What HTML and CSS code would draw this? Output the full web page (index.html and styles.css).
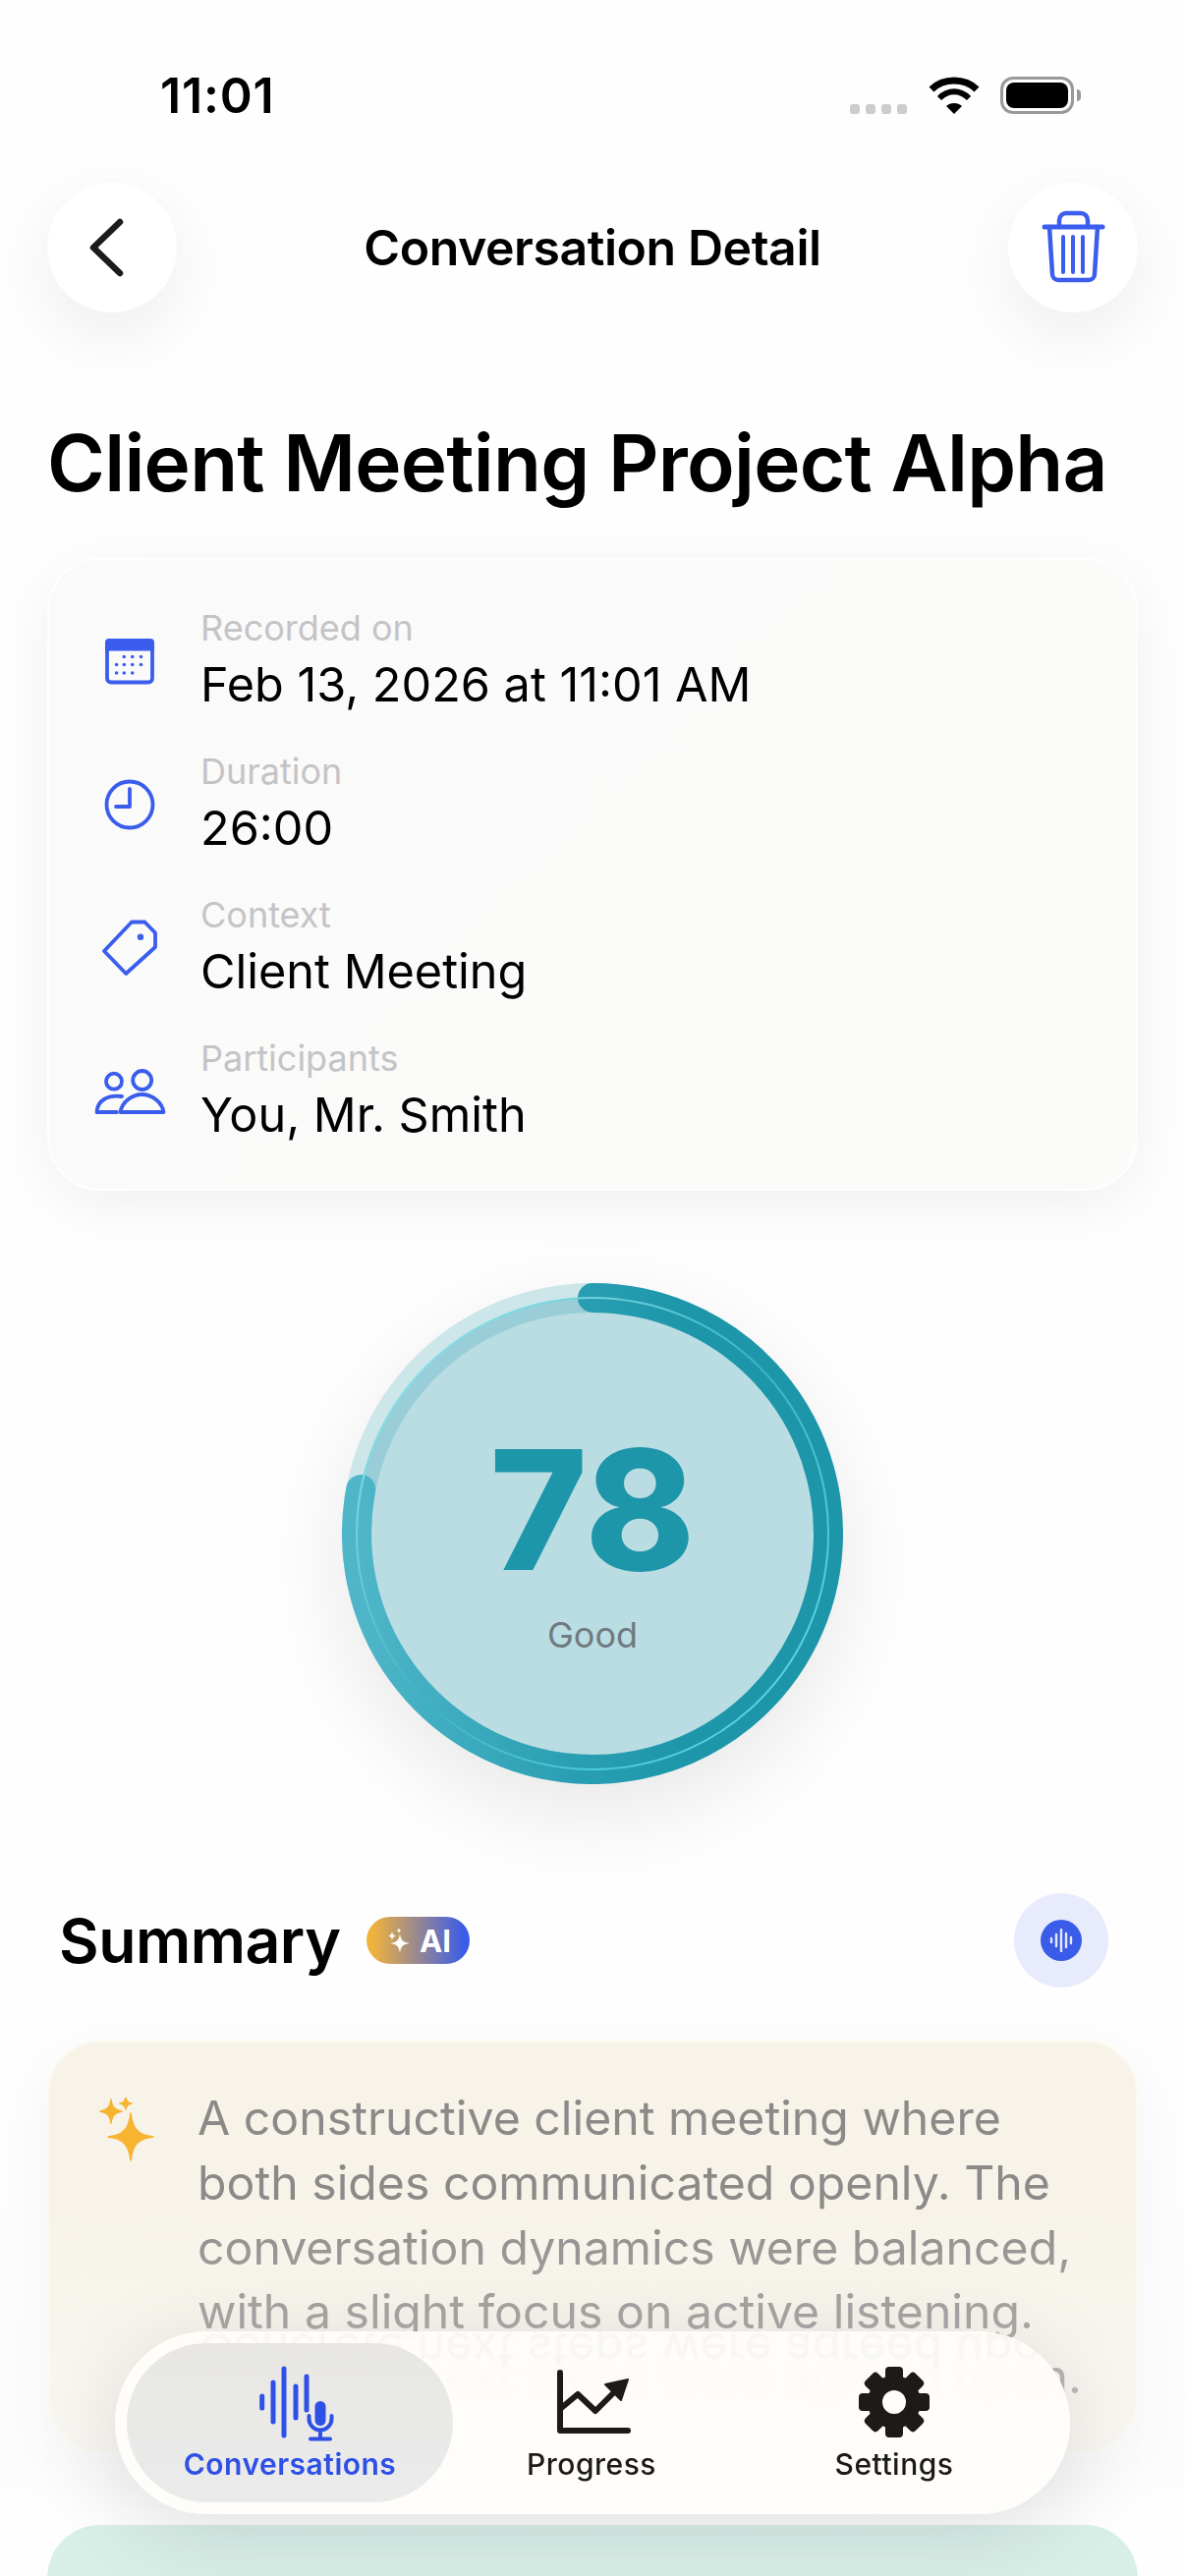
FILE: index.html
```html
<!DOCTYPE html>
<html lang="en">
<head>
<meta charset="utf-8">
<title>Conversation Detail</title>
<link rel="stylesheet" href="styles.css">
</head>
<body>
<div class="screen">
  <div class="status">
    <span class="time">11:01</span>
    <div class="status-icons">
      <div class="signal"><i></i><i></i><i></i><i></i></div>
      <svg class="wifi" viewBox="0 0 52 38" width="52" height="38"><path d="M3 13C15 1 37 1 49 13" fill="none" stroke="#000" stroke-width="7"/><path d="M11 22C20 13 32 13 41 22" fill="none" stroke="#000" stroke-width="6"/><path d="M18 30C22 26 30 26 34 30L26 38Z"/></svg>
      <div class="battery"><div class="battery-fill"></div></div>
      <div class="battery-tip"></div>
    </div>
  </div>

  <header class="topbar">
    <button class="round-btn">
      <svg class="back-icon" viewBox="0 0 60 72" width="60" height="72"><path d="M38 10L11 36L38 62" fill="none" stroke="#1c1c1c" stroke-width="6.5" stroke-linecap="round" stroke-linejoin="round"/></svg>
    </button>
    <div class="topbar-title">Conversation Detail</div>
    <button class="round-btn">
      <svg viewBox="0 0 70 80" width="70" height="80" fill="none" stroke="#3b5ded" stroke-linecap="round" stroke-linejoin="round"><path d="M6 19H65" stroke-width="5"/><path d="M21 19V12a7 7 0 0 1 7-7h15a7 7 0 0 1 7 7V19" stroke-width="4.5"/><path d="M11 19L14 67a6 6 0 0 0 6 6h31a6 6 0 0 0 6-6L60 19" stroke-width="4.5"/><path d="M25 29V65M35 29V65M45 29V65" stroke-width="4"/></svg>
    </button>
  </header>

  <h1 class="page-title">Client Meeting Project Alpha</h1>

  <section class="info-card">
    <div class="info-row">
      <div class="info-icon">
        <svg viewBox="0 0 60 60" width="60" height="60"><rect x="7" y="9" width="46" height="42.500" rx="4" fill="none" stroke="#3b5ded" stroke-width="3.800"/><path d="M9 7h42a4 4 0 0 1 4 4v8.500H5V11a4 4 0 0 1 4-4z" fill="#3b5ded"/><g fill="#3b5ded"><circle cx="24.300" cy="25.500" r="1.800"/><circle cx="32.700" cy="25.500" r="1.800"/><circle cx="41.500" cy="25.500" r="1.800"/><circle cx="16.600" cy="33.500" r="1.800"/><circle cx="24.300" cy="33.500" r="1.800"/><circle cx="32.700" cy="33.500" r="1.800"/><circle cx="41.500" cy="33.500" r="1.800"/><circle cx="16.600" cy="42" r="1.800"/><circle cx="24.300" cy="42" r="1.800"/><circle cx="32.700" cy="42" r="1.800"/></g></svg>
      </div>
      <div class="info-text"><div class="info-label">Recorded on</div><div class="info-value">Feb 13, 2026 at 11:01 AM</div></div>
    </div>
    <div class="info-row">
      <div class="info-icon">
        <svg viewBox="0 0 60 60" width="60" height="60" fill="none" stroke="#3b5ded" stroke-width="3.800" stroke-linecap="round" stroke-linejoin="round"><circle cx="30" cy="30" r="23.500"/><path d="M30 14V32H16"/></svg>
      </div>
      <div class="info-text"><div class="info-label">Duration</div><div class="info-value">26:00</div></div>
    </div>
    <div class="info-row">
      <div class="info-icon">
        <svg viewBox="0 0 60 60" width="60" height="60"><path d="M4 33L32 3.500H45.300L56 14.500V29L26.200 56Z" fill="none" stroke="#3b5ded" stroke-width="3.800" stroke-linejoin="round"/><circle cx="41" cy="18.800" r="3.200" fill="#3b5ded"/></svg>
      </div>
      <div class="info-text"><div class="info-label">Context</div><div class="info-value">Client Meeting</div></div>
    </div>
    <div class="info-row">
      <div class="info-icon">
        <svg viewBox="0 0 80 60" width="80" height="60" fill="none" stroke="#3b5ded" stroke-width="3.800" stroke-linejoin="round" stroke-linecap="round"><circle cx="24" cy="19.700" r="8"/><circle cx="52.700" cy="18.500" r="9.500"/><path d="M32 35C18 33 7 39 6.500 51H27"/><path d="M30.500 51C32 41 42 33 52.500 33C63 33 73 41 74.500 51Z"/></svg>
      </div>
      <div class="info-text"><div class="info-label">Participants</div><div class="info-value">You, Mr. Smith</div></div>
    </div>
  </section>

  <section class="score">
    <div class="score-ring">
      <svg viewBox="15 15 510 510" width="510" height="510">
        <defs>
          <linearGradient id="arc" gradientUnits="userSpaceOnUse" x1="510" y1="270" x2="30" y2="270"><stop offset="0.3" stop-color="#1d96aa"/><stop offset="0.55" stop-color="#2a9fb3"/><stop offset="1" stop-color="#4fb6c9"/></linearGradient>
          <linearGradient id="line" x1="0" y1="0" x2="1" y2="1"><stop offset="0" stop-color="#a4f0f2"/><stop offset="0.5" stop-color="#3ab4c4"/><stop offset="1" stop-color="#5fe3ea"/></linearGradient>
        </defs>
        <circle cx="270" cy="270" r="255" fill="#cde6ea"/>
        <circle cx="270" cy="270" r="240" fill="#99ced8"/>
        <circle cx="270" cy="270" r="225" fill="#b9dde2"/>
        <path d="M270 30A240 240 0 1 1 34.250 225" fill="none" stroke="url(#arc)" stroke-width="30" stroke-linecap="round"/>
        <circle cx="270" cy="270" r="240" fill="none" stroke="url(#line)" stroke-width="2"/>
      </svg>
      <div class="score-text">
        <div class="score-num">78</div>
        <div class="score-label">Good</div>
      </div>
    </div>
  </section>

  <div class="summary-head">
    <h2 class="summary-title">Summary</h2>
    <span class="ai-pill">
      <svg viewBox="0 0 26 28" width="26" height="28" fill="#fff"><path d="M14 7C15 14 17 16 24 17C17 18 15 20 14 27C13 20 11 18 4 17C11 16 13 14 14 7Z"/><path d="M6 5C6.500 8 7.500 9 10 9.500C7.500 10 6.500 11 6 14C5.500 11 4.500 10 2 9.500C4.500 9 5.500 8 6 5Z"/><path d="M13 1C13.300 3 14 3.700 16 4C14 4.300 13.300 5 13 7C12.700 5 12 4.300 10 4C12 3.700 12.700 3 13 1Z"/></svg>
      <span>AI</span>
    </span>
    <div class="listen-btn">
      <div class="listen-dot">
        <svg viewBox="0 0 26 24" width="26" height="24" stroke="#e6eafd" stroke-width="2.400" stroke-linecap="round"><path d="M3 10V14M8 6V18M13 1V23M18 5V19M23 9V15"/></svg>
      </div>
    </div>
  </div>

  <section class="summary-card">
    <svg class="spark" viewBox="0 0 70 80" width="70" height="80" fill="#f6b431" stroke="#f6b431" stroke-width="1.500" stroke-linejoin="round"><path d="M38 16C40 32 45 38 61 40C45 42 40 48 38 64C36 48 31 42 15 40C31 38 36 32 38 16Z"/><path d="M18 2C19 10 22 13 29 14C22 15 19 18 18 26C17 18 14 15 7 14C14 13 17 10 18 2Z"/><path d="M33 0C33.600 4 35 5.500 39 6C35 6.500 33.600 8 33 12C32.400 8 31 6.500 27 6C31 5.500 32.400 4 33 0Z"/></svg>
    <p class="summary-text">A constructive client meeting where both sides communicated openly. The conversation dynamics were balanced, with a slight focus on active listening. Concrete next steps were agreed upon.</p>
  </section>

  <section class="mint-card"></section>

  <div class="fade"></div>

  <nav class="tabbar">
    <div class="ghost" aria-hidden="true"></div>
    <div class="tab tab-active">
      <svg viewBox="0 0 90 80" width="90" height="80" fill="none" stroke="#2e50e6" stroke-linecap="round"><path d="M16.700 34V46M28 20V60M39 6V74M51 24V56M62 14V48" stroke-width="5"/><rect x="70.500" y="39" width="11" height="25" rx="5.500" fill="#2e50e6" stroke="none"/><path d="M64.500 54V57a11.500 11.500 0 0 0 23 0V54M76 69V77M66 77.500H86" stroke-width="4"/></svg>
      <span>Conversations</span>
    </div>
    <div class="tab">
      <svg viewBox="0 0 80 80" width="80" height="80" fill="none" stroke="#1c1b18" stroke-linecap="round" stroke-linejoin="round"><path d="M8 10V69H77" stroke-width="6"/><path d="M8 47L26 32L44 49L63 30" stroke-width="6"/><path d="M77 17L54 22L70 38Z" fill="#1c1b18" stroke-width="2"/></svg>
      <span>Progress</span>
    </div>
    <div class="tab">
      <svg viewBox="-40 -40 80 80" width="80" height="80" fill="#1c1b18"><circle r="19.500" fill="none" stroke="#1c1b18" stroke-width="15"/><rect x="-9" y="-36" width="18" height="18" rx="4"/><rect x="-9" y="-36" width="18" height="18" rx="4" transform="rotate(45)"/><rect x="-9" y="-36" width="18" height="18" rx="4" transform="rotate(90)"/><rect x="-9" y="-36" width="18" height="18" rx="4" transform="rotate(135)"/><rect x="-9" y="-36" width="18" height="18" rx="4" transform="rotate(180)"/><rect x="-9" y="-36" width="18" height="18" rx="4" transform="rotate(225)"/><rect x="-9" y="-36" width="18" height="18" rx="4" transform="rotate(270)"/><rect x="-9" y="-36" width="18" height="18" rx="4" transform="rotate(315)"/></svg>
      <span>Settings</span>
    </div>
  </nav>
</div>
</body>
</html>
```

FILE: styles.css
```css
* { box-sizing: border-box; }
html, body { margin: 0; padding: 0; background: #fff; }
body { font-family: Inter, "Liberation Sans", sans-serif; color: #000; }

.screen {
  position: relative;
  width: 1206px;
  height: 2622px;
  overflow: hidden;
  background: #fefefe;
}

.status {
  display: flex;
  justify-content: space-between;
  align-items: center;
  height: 186px;
  padding: 8px 106px 0 163px;
}
.time { font-size: 50px; font-weight: 600; letter-spacing: .8px; line-height: 54px; }
.status-icons { display: flex; align-items: flex-end; height: 38px; }
.signal { display: flex; gap: 6px; margin-right: 22px; }
.signal i { width: 10px; height: 10px; border-radius: 3px; background: #ccc; }
.wifi { margin-right: 21px; }
.battery {
  width: 75px; height: 38px; border: 3px solid #999; border-radius: 13px; padding: 3px; background: #fff;
}
.battery-fill { width: 100%; height: 100%; background: #000; border-radius: 8px; }
.battery-tip { width: 4px; height: 12px; background: #999; border-radius: 0 4px 4px 0; margin: 0 0 13px 3px; }

.topbar {
  display: flex;
  justify-content: space-between;
  align-items: center;
  padding: 0 48px;
  height: 132px;
}
.round-btn {
  width: 132px; height: 132px;
  border-radius: 50%;
  border: 0;
  padding: 0;
  background: #fff;
  display: flex; align-items: center; justify-content: center;
  box-shadow: 0 22px 70px rgba(0,0,0,.07);
}
.topbar-title { font-size: 50px; font-weight: 600; letter-spacing: -0.45px; line-height: 60px; }

.page-title {
  margin: 100px 0 0;
  padding: 0 48px;
  font-size: 80px;
  font-weight: 600;
  line-height: 106px;
  letter-spacing: -0.75px;
  white-space: nowrap;
}

.info-card {
  margin: 44px 48px 0;
  height: 644px;
  padding: 44px 0 0 46px;
  display: flex;
  flex-direction: column;
  gap: 30px;
  border-radius: 54px;
  background: linear-gradient(135deg, #fafafa, #fbfbf9);
  border: 2px solid #fefefe;
  box-shadow: 0 14px 60px rgba(0,0,0,.06);
}
.info-row { display: flex; align-items: center; gap: 36px; }
.info-icon { flex: none; width: 72px; height: 60px; margin-top: 1px; display: flex; align-items: center; justify-content: center; }
.info-icon svg { flex: none; }
.info-text { display: flex; flex-direction: column; }
.info-label { font-size: 36px; line-height: 50px; color: #c4c4c6; }
.info-value { font-size: 48.600px; line-height: 66px; color: #000; }

.score { display: flex; justify-content: center; margin-top: 94px; }
.score-ring {
  position: relative;
  width: 510px; height: 510px;
  border-radius: 50%;
  box-shadow: 0 30px 90px rgba(0,0,0,.09);
}
.score-ring svg { display: block; }
.score-text {
  position: absolute; inset: 0;
  display: flex; flex-direction: column; align-items: center;
}
.score-num {
  margin-top: 131px;
  font-size: 169px; font-weight: 800; line-height: 200px; color: #1e96aa;
}
.score-label { margin-top: 2px; font-size: 36px; line-height: 50px; color: #6f7a80; }

.summary-head {
  display: flex;
  align-items: center;
  margin-top: 111px;
  padding: 0 78px 0 60px;
  height: 96px;
}
.summary-title { margin: 0; font-size: 62.500px; font-weight: 600; line-height: 80px; letter-spacing: -0.5px; }
.ai-pill {
  display: flex; align-items: center; justify-content: center; gap: 8px;
  width: 105px; height: 48px;
  margin-left: 27px;
  border-radius: 24px;
  background: linear-gradient(90deg, #f2b33c 5%, #3a5ce8 95%);
  color: #fff;
  font-size: 31px; font-weight: 700;
}
.listen-btn {
  margin-left: auto;
  width: 96px; height: 96px; border-radius: 50%;
  background: #e8ebfc;
  display: flex; align-items: center; justify-content: center;
}
.listen-dot {
  width: 42px; height: 42px; border-radius: 50%;
  background: #3a5ce8;
  display: flex; align-items: center; justify-content: center;
}

.summary-card {
  margin: 54px 48px 0;
  height: 420px;
  display: flex;
  gap: 36px;
  padding: 44px 40px 0 45px;
  border-radius: 54px;
  background: #f7f3e9;
  border: 2px solid #fcf9ec;
  box-shadow: 0 20px 70px rgba(0,0,0,.05);
}
.spark { flex: none; margin-top: 12px; }
.summary-text { margin: 0; font-size: 48.200px; line-height: 65.800px; color: #8c8a88; }

.mint-card {
  margin: 73px 48px 0;
  height: 300px;
  border-radius: 54px;
  background: #d8efe8;
}

.fade {
  position: absolute;
  left: 0; right: 0; top: 2240px; height: 382px;
  background: linear-gradient(180deg, rgba(250,250,250,0) 0%, rgba(250,250,250,.55) 65%, rgba(250,250,250,0) 88%);
  pointer-events: none;
}

.tabbar {
  position: absolute;
  left: 117px; top: 2373px;
  width: 972px; height: 186px;
  padding: 12px;
  display: grid;
  grid-template-columns: 332px 282px 334px;
  border-radius: 93px;
  background: rgba(254,253,250,.95);
  backdrop-filter: blur(3px);
  box-shadow: 0 16px 90px rgba(0,0,0,.12);
  overflow: hidden;
}
.ghost {
  position: absolute;
  left: 85px; top: -14px;
  font-size: 48.200px; line-height: 66px; white-space: nowrap;
  color: #555;
  opacity: .04;
  transform: scaleY(-1);
  filter: blur(1px);
}
.ghost::before { content: "Concrete next steps were agreed upon."; }
.tab {
  position: relative;
  display: flex; flex-direction: column; align-items: center;
  padding-top: 20px;
  font-size: 30px; font-weight: 500; letter-spacing: .5px; line-height: 36px; color: #1c1b18;
}
.tab svg { display: block; margin-bottom: 5px; }
.tab-active {
  border-radius: 81px;
  background: linear-gradient(180deg, rgba(230,229,225,.92), #ebebec);
  color: #2e50e6;
  font-weight: 600;
}
```
